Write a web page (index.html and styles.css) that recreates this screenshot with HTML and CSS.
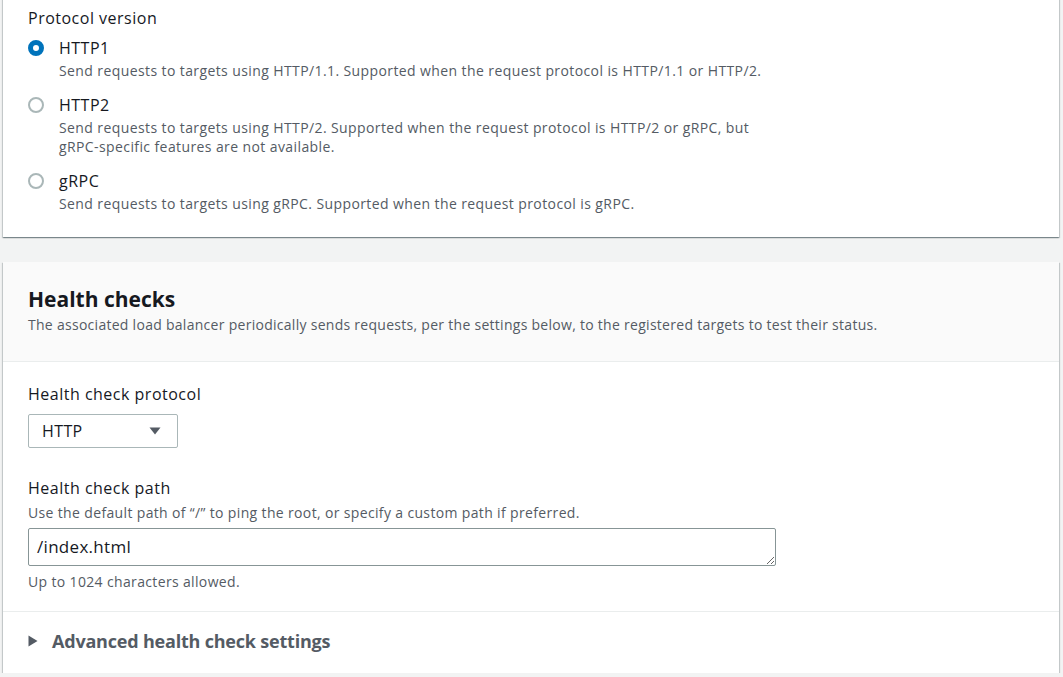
FILE: index.html
```html
<!DOCTYPE html>
<html lang="en">
<head>
<meta charset="utf-8">
<title>Target group settings</title>
<link rel="stylesheet" href="styles.css">
</head>
<body>
<div class="page">
  <section class="card card-top">
    <div class="card-body">
      <div class="field-label">Protocol version</div>
      <div class="radio-group">
        <label class="radio-row">
          <span class="radio checked"></span>
          <span class="radio-text">
            <span class="radio-label">HTTP1</span>
            <span class="radio-desc">Send requests to targets using HTTP/1.1. Supported when the request protocol is HTTP/1.1 or HTTP/2.</span>
          </span>
        </label>
        <label class="radio-row">
          <span class="radio"></span>
          <span class="radio-text">
            <span class="radio-label">HTTP2</span>
            <span class="radio-desc narrow">Send requests to targets using HTTP/2. Supported when the request protocol is HTTP/2 or gRPC, but gRPC-specific features are not available.</span>
          </span>
        </label>
        <label class="radio-row">
          <span class="radio"></span>
          <span class="radio-text">
            <span class="radio-label">gRPC</span>
            <span class="radio-desc">Send requests to targets using gRPC. Supported when the request protocol is gRPC.</span>
          </span>
        </label>
      </div>
    </div>
  </section>

  <section class="card card-health">
    <header class="card-header">
      <h2 class="card-title">Health checks</h2>
      <p class="card-desc">The associated load balancer periodically sends requests, per the settings below, to the registered targets to test their status.</p>
    </header>
    <div class="card-body health-body">
      <div class="field">
        <div class="field-label">Health check protocol</div>
        <div class="select">
          <span class="select-value">HTTP</span>
          <svg class="select-caret" width="12" height="8" viewBox="0 0 12 8"><polygon points="0.5,0.5 11.5,0.5 6,7.5" fill="#545b64"/></svg>
        </div>
      </div>
      <div class="field field-path">
        <div class="field-label">Health check path</div>
        <div class="field-desc">Use the default path of “/” to ping the root, or specify a custom path if preferred.</div>
        <textarea class="textarea" rows="1">/index.html</textarea>
        <div class="field-hint">Up to 1024 characters allowed.</div>
      </div>
    </div>
    <div class="expander">
      <svg class="expander-caret" width="10" height="12" viewBox="0 0 10 12"><polygon points="0.5,0.5 9.5,6 0.5,11.5" fill="#545b64"/></svg>
      <span class="expander-title">Advanced health check settings</span>
    </div>
  </section>
</div>
</body>
</html>
```
FILE: styles.css
```css
* { box-sizing: border-box; }
html, body {
  margin: 0;
  padding: 0;
  background: #f2f3f3;
  font-family: "Open Sans", "Noto Sans", Arial, sans-serif;
  color: #16191f;
}
.page {
  margin-top: -20px;
  padding: 0 4px 0 3px;
  display: flex;
  flex-direction: column;
  gap: 25px;
}
.card {
  background: #fff;
  box-shadow: 0 1px 1px 0 rgba(0,28,36,0.3), 1px 1px 1px 0 rgba(0,28,36,0.15), -1px 1px 1px 0 rgba(0,28,36,0.15);
}
.card-top .card-body {
  padding: 27px 25px 24px 25px;
}
.field-label {
  font-size: 16px;
  line-height: 22px;
  letter-spacing: 0.5px;
}
.radio-group {
  margin-top: 8px;
  display: flex;
  flex-direction: column;
  gap: 14px;
}
.radio-row {
  display: flex;
  align-items: flex-start;
  gap: 15px;
}
.radio {
  width: 16px;
  height: 16px;
  border-radius: 50%;
  border: 2px solid #aab7b8;
  margin-top: 3px;
  flex: none;
  background: #fff;
}
.radio.checked {
  border: 5px solid #0073bb;
}
.radio-text {
  display: flex;
  flex-direction: column;
}
.radio-label {
  font-size: 16px;
  line-height: 22px;
  letter-spacing: 0.5px;
}
.radio-desc {
  margin-top: 2px;
  font-size: 14px;
  line-height: 19px;
  letter-spacing: 0.4px;
  color: #545b64;
}
.radio-desc.narrow {
  max-width: 700px;
}
.card-header {
  background: #fafafa;
  border-bottom: 1px solid #eaeded;
  padding: 23px 25px 26px 25px;
}
.card-title {
  margin: 0;
  font-size: 21px;
  line-height: 28px;
  font-weight: 700;
}
.card-desc {
  margin: 0;
  margin-top: 2px;
  font-size: 14px;
  line-height: 20px;
  letter-spacing: 0.28px;
  color: #545b64;
}
.health-body {
  padding: 21px 25px 20px 25px;
  border-bottom: 1px solid #eaeded;
  display: flex;
  flex-direction: column;
  gap: 29px;
}
.select {
  margin-top: 9px;
  width: 150px;
  height: 34px;
  border: 1px solid #aab7b8;
  border-radius: 2px;
  display: flex;
  align-items: center;
  justify-content: space-between;
  padding: 0 16px 0 13px;
}
.select-value {
  font-size: 16px;
  letter-spacing: 0.4px;
}
.field-desc, .field-hint {
  font-size: 14px;
  line-height: 18px;
  letter-spacing: 0.35px;
  color: #545b64;
}
.field-desc { margin-top: 5px; }
.textarea {
  display: block;
  margin-top: 6px;
  width: 748px;
  height: 38px;
  border: 1px solid #879596;
  border-radius: 2px;
  padding: 6px 8px;
  font-family: inherit;
  font-size: 17px;
  line-height: 24px;
  letter-spacing: 0.3px;
  color: #16191f;
  resize: vertical;
  overflow: hidden;
}
.field-hint { margin-top: 7px; }
.expander {
  display: flex;
  align-items: center;
  gap: 14px;
  padding: 17px 25px 20px 25px;
}
.expander-title {
  font-size: 18px;
  line-height: 24px;
  font-weight: 700;
  letter-spacing: -0.2px;
  color: #545b64;
}
```
